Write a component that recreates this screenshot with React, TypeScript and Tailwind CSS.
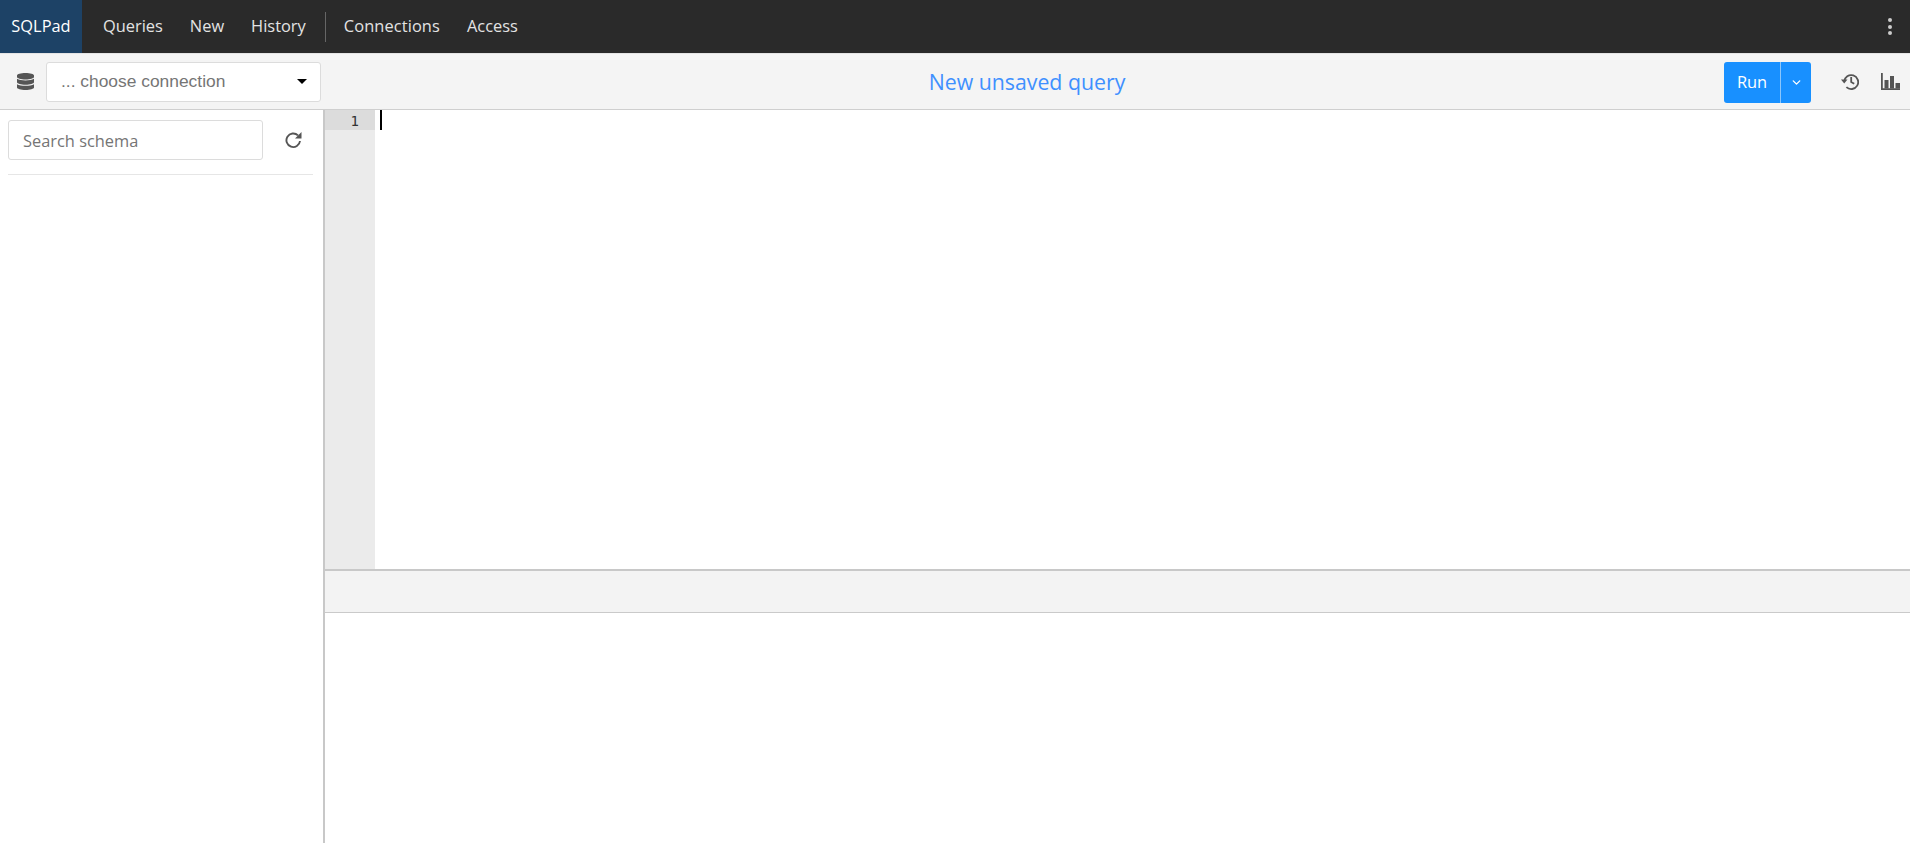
import { ChevronDown } from 'lucide-react';

const navFont = "font-['Open_Sans',sans-serif]";

const DatabaseIcon = () => (
  <svg viewBox="0 0 448 512" preserveAspectRatio="none" className="w-[17px] h-[17px] fill-[#555]">
    <path d="M448 73.1v45.7C448 159.1 347.700 192 224 192S0 159.100 0 118.900V73.100C0 32.900 100.300 0 224 0s224 32.900 224 73.100zM448 176v102.900C448 319.100 347.700 352 224 352S0 319.100 0 278.900V176c48.100 33.100 136.200 48.600 224 48.600S399.900 209.100 448 176zm0 160v102.900C448 479.100 347.700 512 224 512S0 479.100 0 438.900V336c48.100 33.100 136.200 48.600 224 48.600S399.900 369.100 448 336z" />
  </svg>
);

const HistoryIcon = () => (
  <svg viewBox="0 0 18 17" className="w-[18px] h-[17px] fill-none stroke-[#555] stroke-[1.8]">
    <path d="M3.200 8.500a7 7 0 1 1 2.200 5.700" />
    <path d="M0 6.500l3.200 4 3.300-4z" className="fill-[#555] stroke-none" />
    <path d="M10.200 4v5l3 1.800" />
  </svg>
);

const BarsIcon = () => (
  <svg viewBox="0 0 19 17" className="w-[19px] h-[17px] fill-[#555]">
    <path d="M0 0h1.800v15.200H19V17H0z" />
    <rect x="3.500" y="7" width="4" height="8.500" />
    <rect x="9" y="3" width="4" height="12.500" />
    <rect x="14.500" y="10" width="4.500" height="5.500" />
  </svg>
);

const RefreshIcon = () => (
  <svg viewBox="0 0 17 18" className="w-[17px] h-[18px] fill-none stroke-[#555] stroke-[1.9]">
    <path d="M15 10a6.800 6.800 0 1 1-2-5.600" />
    <path d="M16.500 1v6.500h-6.500z" className="fill-[#555] stroke-none" />
  </svg>
);

const App = () => {
  return (
    <div className="h-[843px] w-[1910px] flex flex-col bg-white overflow-hidden">
      {/* Top nav */}
      <div className={`h-[53px] shrink-0 flex items-center bg-[#2a2a2a] text-[#e3e3e3] text-[16.4px] ${navFont}`}>
        <div className="h-full w-[82px] flex items-center justify-center bg-[#1d4266] text-white">
          SQLPad
        </div>
        <div className="flex items-center ml-[21px] gap-[27px]">
          <span>Queries</span>
          <span>New</span>
          <span>History</span>
        </div>
        <div className="w-px h-[30px] bg-[#666] ml-[19px] mr-[18px]" />
        <div className="flex items-center gap-[27px]">
          <span className="tracking-[0.1px]">Connections</span>
          <span>Access</span>
        </div>
        <div className="ml-auto mr-[18px] flex flex-col gap-[2.5px]">
          <span className="w-[4px] h-[4px] rounded-full bg-[#ccc]" />
          <span className="w-[4px] h-[4px] rounded-full bg-[#ccc]" />
          <span className="w-[4px] h-[4px] rounded-full bg-[#ccc]" />
        </div>
      </div>

      {/* Toolbar */}
      <div className="h-[57px] shrink-0 flex items-center bg-[#f4f4f4] border-y-[1px] border-t-[#e4e4e4] border-b-[#cfcfcf] pl-[17px] pr-[10px]">
        <DatabaseIcon />
        <div className="ml-[12px] w-[275px] h-[40px] flex items-center justify-between bg-white border border-[#dcdcdc] rounded-[3px] pl-[14px] pr-[13px] font-['Liberation_Sans',sans-serif] text-[17.4px] text-[#757575]">
          <span>... choose connection</span>
          <span className="w-0 h-0 border-x-[5px] border-x-transparent border-t-[5px] border-t-black" />
        </div>
        <div className={`flex-1 pt-[1px] pl-[9px] text-center text-[21.3px] text-[#3f90ff] ${navFont}`}>
          New unsaved query
        </div>
        <div className="flex items-center">
          <div className={`mt-[1px] h-[41px] w-[87px] flex items-stretch rounded-[3px] bg-[#1890ff] text-white text-[16.4px] ${navFont}`}>
            <div className="flex-1 flex items-center justify-center border-r border-[#8cc6fb]">Run</div>
            <div className="w-[30px] flex items-center justify-center">
              <ChevronDown size={13} strokeWidth={2.5} />
            </div>
          </div>
          <div className="ml-[30px]"><HistoryIcon /></div>
          <div className="ml-[22px]"><BarsIcon /></div>
        </div>
      </div>

      {/* Body */}
      <div className="flex-1 flex min-h-0">
        <div className="w-[325px] shrink-0 border-r-2 border-[#c8c8c8] pt-[10px] pl-[8px] pr-[10px]">
          <div className="flex items-center h-[40px]">
            <div className={`w-[255px] h-[40px] flex items-center bg-white border border-[#dcdcdc] rounded-[3px] pt-[2px] pl-[14px] text-[16.4px] text-[#757575] ${navFont}`}>
              Search schema
            </div>
            <div className="ml-[22px]"><RefreshIcon /></div>
          </div>
          <div className="mt-[14px] border-t border-[#e6e6e6]" />
        </div>

        <div className="flex-1 flex flex-col min-w-0">
          <div className="h-[459px] shrink-0 flex">
            <div className="w-[50px] bg-[#ebebeb]">
              <div className="h-[20px] bg-[#dcdcdc] pr-[16px] text-right font-['DejaVu_Sans_Mono',monospace] text-[14px] leading-[22px] text-[#333]">
                1
              </div>
            </div>
            <div className="flex-1 pl-[5px]">
              <div className="w-[2px] h-[20px] bg-black" />
            </div>
          </div>
          <div className="h-[44px] shrink-0 bg-[#f3f3f3] border-t-2 border-b border-t-[#c8c8c8] border-b-[#cacaca]" />
          <div className="flex-1 bg-white" />
        </div>
      </div>
    </div>
  );
};

export default App;
